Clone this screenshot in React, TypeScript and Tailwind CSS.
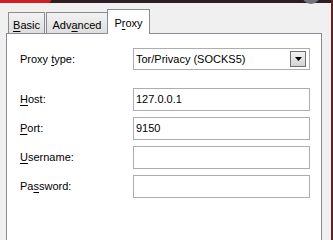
import React from "react";

const Tab: React.FC<{ label: React.ReactNode; active?: boolean; className?: string }> = ({
  label,
  active,
  className = "",
}) => {
  if (active) {
    return (
      <div
        className={`relative z-10 -mb-px -ml-px flex h-[25px] items-start justify-center border border-b-0 border-[#898c95] bg-white pt-[5px] ${className}`}
      >
        {label}
      </div>
    );
  }
  return (
    <div
      className={`flex h-[21px] items-start justify-center border border-b-0 border-[#898c95] bg-linear-to-b from-[#f3f3f3] to-[#dedede] pt-[4px] ${className}`}
    >
      {label}
    </div>
  );
};

const Field: React.FC<{ value?: string }> = ({ value }) => (
  <div className="flex h-[23px] w-[177px] items-center border border-[#abadb3] bg-white pl-[2px] text-black">
    {value}
  </div>
);

export default function App() {
  return (
    <div
      className="flex h-[240px] w-[333px] overflow-hidden bg-[#f0f0f0] text-[11px] text-black"
      style={{ fontFamily: '"Liberation Sans", Arial, sans-serif' }}
    >
      <div className="flex flex-1 flex-col">
        {/* window top edge */}
        <div className="relative h-[3px] bg-[#2d1e24]">
          <div className="absolute left-0 top-0 h-[3px] w-[51px] rounded-br-[3px] bg-[#cf1f22]" />
          <div className="absolute left-[302px] top-[-14px] h-[18px] w-[18px] rounded-full bg-[#74737b]" />
        </div>

        {/* tabs */}
        <div className="flex items-end pl-[8px] pt-[6px]">
          <Tab
            className="w-[37px]"
            label={
              <span>
                <u className="underline-offset-2">B</u>asic
              </span>
            }
          />
          <Tab
            className="ml-px w-[62px]"
            label={
              <span>
                Adv<u className="underline-offset-2">a</u>nced
              </span>
            }
          />
          <Tab
            active
            className="w-[43px]"
            label={
              <span>
                P<u className="underline-offset-2">r</u>oxy
              </span>
            }
          />
        </div>

        {/* panel */}
        <div className="ml-[6px] flex w-[316px] flex-1 flex-col border border-b-0 border-[#898c95] bg-white pl-[13px] pt-[14px]">
          <div className="flex items-center">
            <div className="w-[113px]">
              Proxy <u className="underline-offset-2">t</u>ype:
            </div>
            <div className="flex h-[22px] w-[177px] items-center justify-between border border-[#abadb3] bg-white pl-[2px] pr-[3px]">
              <span>Tor/Privacy (SOCKS5)</span>
              <div className="flex h-[16px] w-[16px] items-center justify-center border border-[#707070] bg-linear-to-b from-[#f2f2f2] to-[#d4d4d4]">
                <svg width="7" height="4" viewBox="0 0 7 4">
                  <path d="M0 0h7L3.5 4z" fill="#000" />
                </svg>
              </div>
            </div>
          </div>

          <div className="mt-[18px] flex flex-col gap-[6px]">
            <div className="flex items-center">
              <div className="w-[113px]">
                <u className="underline-offset-2">H</u>ost:
              </div>
              <Field value="127.0.0.1" />
            </div>
            <div className="flex items-center">
              <div className="w-[113px]">
                <u className="underline-offset-2">P</u>ort:
              </div>
              <Field value="9150" />
            </div>
            <div className="flex items-center">
              <div className="w-[113px]">
                <u className="underline-offset-2">U</u>sername:
              </div>
              <Field />
            </div>
            <div className="flex items-center">
              <div className="w-[113px]">
                Pa<u className="underline-offset-2">s</u>sword:
              </div>
              <Field />
            </div>
          </div>
        </div>
      </div>

      {/* right window edge */}
      <div className="w-[2px] bg-[#5c2626]" />
    </div>
  );
}
